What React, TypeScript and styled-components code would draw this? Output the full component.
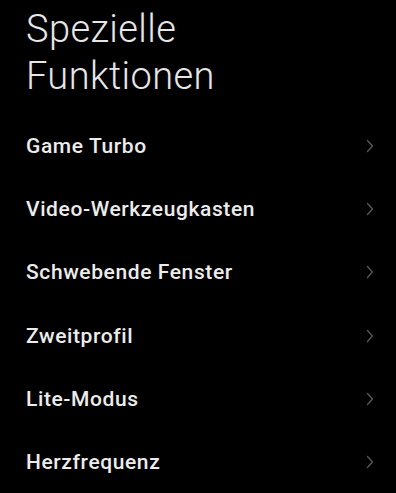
import styled, { createGlobalStyle } from "styled-components";

const GlobalStyle = createGlobalStyle`
  html, body {
    margin: 0;
    padding: 0;
    background: #000;
  }

  body {
    font-family: Roboto, "Noto Sans", "Liberation Sans", sans-serif;
    -webkit-font-smoothing: antialiased;
  }
`;

const Screen = styled.div`
  min-height: 100vh;
  background: #000;
  padding: 6px 0 0 26px;
  box-sizing: border-box;
`;

const Title = styled.h1`
  margin: 0 0 14.5px;
  font-size: 38px;
  line-height: 47px;
  font-weight: 300;
  letter-spacing: 0.4px;
  color: #e6e6e6;
`;

const List = styled.ul`
  list-style: none;
  margin: 0;
  padding: 0;
`;

const Row = styled.li`
  display: flex;
  align-items: center;
  justify-content: space-between;
  height: 63.2px;
  padding-right: 22px;
`;

const Label = styled.span`
  font-size: 21px;
  font-weight: 500;
  letter-spacing: 0.6px;
  color: #ececec;
`;

const Chevron = styled.svg`
  width: 8px;
  height: 14px;
  flex-shrink: 0;
`;

const items = [
  "Game Turbo",
  "Video-Werkzeugkasten",
  "Schwebende Fenster",
  "Zweitprofil",
  "Lite-Modus",
  "Herzfrequenz",
];

function App() {
  return (
    <>
      <GlobalStyle />
      <Screen>
        <Title>
          Spezielle
          <br />
          Funktionen
        </Title>

        <List>
          {items.map((item) => (
            <Row key={item}>
              <Label>{item}</Label>
              <Chevron viewBox="0 0 8 14">
                <polyline
                  points="1.5,1.5 6.5,7 1.5,12.5"
                  fill="none"
                  stroke="#5a5a5a"
                  strokeWidth="1.3"
                  strokeLinecap="round"
                  strokeLinejoin="round"
                />
              </Chevron>
            </Row>
          ))}
        </List>
      </Screen>
    </>
  );
}

export default App;
